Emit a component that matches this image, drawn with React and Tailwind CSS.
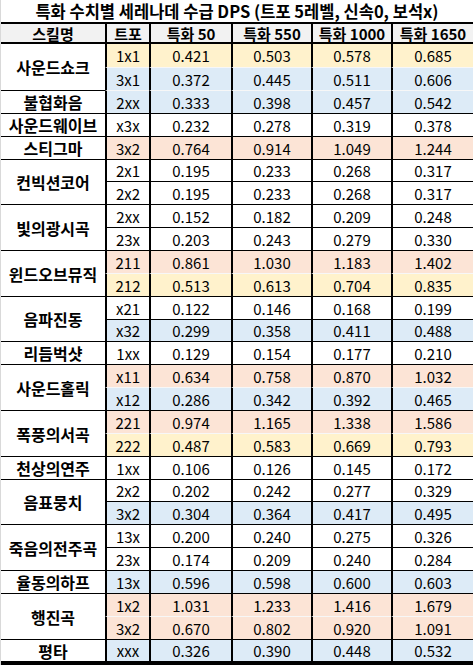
import React from "react";

// 스킬별 트포 조합 / 특화 50, 550, 1000, 1650 수치
// c: y=노랑, b=파랑, p=주황, w=흰색 / soft: 윗줄과 연한 선
const groups = [
  { name: "사운드쇼크", rows: [
    { tp: "1x1", c: "y", v: ["0.421", "0.503", "0.578", "0.685"] },
    { tp: "3x1", c: "b", soft: true, v: ["0.372", "0.445", "0.511", "0.606"] },
  ] },
  { name: "불협화음", rows: [
    { tp: "2xx", c: "b", soft: true, v: ["0.333", "0.398", "0.457", "0.542"] },
  ] },
  { name: "사운드웨이브", rows: [
    { tp: "x3x", c: "w", v: ["0.232", "0.278", "0.319", "0.378"] },
  ] },
  { name: "스티그마", rows: [
    { tp: "3x2", c: "p", v: ["0.764", "0.914", "1.049", "1.244"] },
  ] },
  { name: "컨빅션코어", rows: [
    { tp: "2x1", c: "w", v: ["0.195", "0.233", "0.268", "0.317"] },
    { tp: "2x2", c: "w", v: ["0.195", "0.233", "0.268", "0.317"] },
  ] },
  { name: "빛의광시곡", rows: [
    { tp: "2xx", c: "w", v: ["0.152", "0.182", "0.209", "0.248"] },
    { tp: "23x", c: "w", v: ["0.203", "0.243", "0.279", "0.330"] },
  ] },
  { name: "윈드오브뮤직", rows: [
    { tp: "211", c: "p", v: ["0.861", "1.030", "1.183", "1.402"] },
    { tp: "212", c: "y", soft: true, v: ["0.513", "0.613", "0.704", "0.835"] },
  ] },
  { name: "음파진동", rows: [
    { tp: "x21", c: "w", v: ["0.122", "0.146", "0.168", "0.199"] },
    { tp: "x32", c: "b", v: ["0.299", "0.358", "0.411", "0.488"] },
  ] },
  { name: "리듬벅샷", rows: [
    { tp: "1xx", c: "w", v: ["0.129", "0.154", "0.177", "0.210"] },
  ] },
  { name: "사운드홀릭", rows: [
    { tp: "x11", c: "p", v: ["0.634", "0.758", "0.870", "1.032"] },
    { tp: "x12", c: "b", soft: true, v: ["0.286", "0.342", "0.392", "0.465"] },
  ] },
  { name: "폭풍의서곡", rows: [
    { tp: "221", c: "p", v: ["0.974", "1.165", "1.338", "1.586"] },
    { tp: "222", c: "y", soft: true, v: ["0.487", "0.583", "0.669", "0.793"] },
  ] },
  { name: "천상의연주", rows: [
    { tp: "1xx", c: "w", v: ["0.106", "0.126", "0.145", "0.172"] },
  ] },
  { name: "음표뭉치", rows: [
    { tp: "2x2", c: "w", v: ["0.202", "0.242", "0.277", "0.329"] },
    { tp: "3x2", c: "b", v: ["0.304", "0.364", "0.417", "0.495"] },
  ] },
  { name: "죽음의전주곡", rows: [
    { tp: "13x", c: "w", v: ["0.200", "0.240", "0.275", "0.326"] },
    { tp: "23x", c: "w", v: ["0.174", "0.209", "0.240", "0.284"] },
  ] },
  { name: "율동의하프", rows: [
    { tp: "13x", c: "b", v: ["0.596", "0.598", "0.600", "0.603"] },
  ] },
  { name: "행진곡", rows: [
    { tp: "1x2", c: "p", v: ["1.031", "1.233", "1.416", "1.679"] },
    { tp: "3x2", c: "p", soft: true, v: ["0.670", "0.802", "0.920", "1.091"] },
  ] },
  { name: "평타", rows: [
    { tp: "xxx", c: "b", v: ["0.326", "0.390", "0.448", "0.532"] },
  ] },
];

const fills = {
  y: "bg-[#fff2cc]",
  b: "bg-[#ddebf7]",
  p: "bg-[#fce4d6]",
  w: "bg-white",
};

const widths = ["w-[82px]", "w-[80px]", "w-[80px]", "w-[82px]"];
const headers = ["특화 50", "특화 550", "특화 1000", "특화 1650"];

const App = () => {
  let idx = 0;

  return (
    <div className="w-[473px] h-[665px] overflow-hidden bg-white border-l border-[#d9d9d9] text-black font-['Noto_Sans_CJK_KR',sans-serif]">
      <div className="h-[22px] flex items-center justify-center text-[16.5px] font-bold leading-none">
        특화 수치별 세레나데 수급 DPS (트포 5레벨, 신속0, 보석x)
      </div>

      <div className="h-[22px] flex border-y-2 border-black bg-[#f2f2f2] text-[15px] font-bold leading-none">
        <div className="w-[104px] flex items-center justify-center">스킬명</div>
        <div className="w-[44px] flex items-center justify-center border-l-2 border-black">트포</div>
        {headers.map((h, i) => (
          <div key={h} className={`${widths[i]} flex items-center justify-center border-l-2 border-black`}>
            {h}
          </div>
        ))}
      </div>

      {groups.map((g, gi) => (
        <div key={g.name} className="flex">
          <div
            className={`w-[104px] flex items-center justify-center text-[16px] font-bold leading-none ${
              gi > 0 ? "border-t border-black" : ""
            }`}
          >
            {g.name}
          </div>
          <div className="flex flex-col">
            {g.rows.map((r, ri) => {
              const n = idx++;
              const h = n % 7 === 5 ? "h-[22px]" : "h-[23px]";
              const top = n === 0 ? "" : r.soft ? "border-t border-t-[#f7f7f7]" : "border-t border-t-black";
              return (
                <div key={ri} className={`flex ${h} text-[15px] leading-none`}>
                  <div className={`w-[44px] flex items-center justify-center border-l-2 border-l-black ${top} ${fills[r.c]}`}>
                    {r.tp}
                  </div>
                  {r.v.map((v, vi) => (
                    <div
                      key={vi}
                      className={`${widths[vi]} flex items-center justify-center border-l-2 border-l-black ${top} ${fills[r.c]}`}
                    >
                      {v}
                    </div>
                  ))}
                </div>
              );
            })}
          </div>
        </div>
      ))}

      <div className="h-[4px] bg-black" />
    </div>
  );
};

export default App;
